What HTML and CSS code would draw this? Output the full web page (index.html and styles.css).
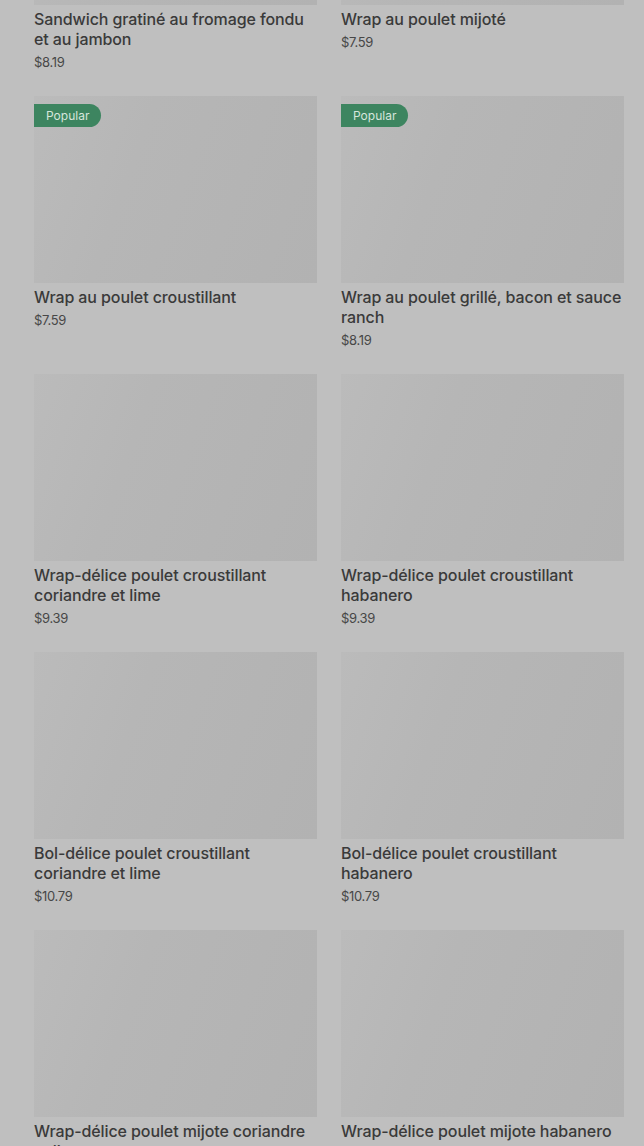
FILE: index.html
```html
<!DOCTYPE html>
<html lang="fr">
<head>
<meta charset="utf-8">
<link rel="stylesheet" href="styles.css">
</head>
<body>
<div class="grid">
  <div class="item"><div class="thumb"></div><div class="title">Sandwich gratiné au fromage fondu et au jambon</div><div class="price">$8.19</div></div>
  <div class="item"><div class="thumb"></div><div class="title">Wrap au poulet mijoté</div><div class="price">$7.59</div></div>
  <div class="item"><div class="thumb"><span class="badge">Popular</span></div><div class="title">Wrap au poulet croustillant</div><div class="price">$7.59</div></div>
  <div class="item"><div class="thumb"><span class="badge">Popular</span></div><div class="title">Wrap au poulet grillé, bacon et sauce ranch</div><div class="price">$8.19</div></div>
  <div class="item"><div class="thumb"></div><div class="title">Wrap-délice poulet croustillant coriandre et lime</div><div class="price">$9.39</div></div>
  <div class="item"><div class="thumb"></div><div class="title">Wrap-délice poulet croustillant habanero</div><div class="price">$9.39</div></div>
  <div class="item"><div class="thumb"></div><div class="title">Bol-délice poulet croustillant coriandre et lime</div><div class="price">$10.79</div></div>
  <div class="item"><div class="thumb"></div><div class="title">Bol-délice poulet croustillant habanero</div><div class="price">$10.79</div></div>
  <div class="item"><div class="thumb"></div><div class="title">Wrap-délice poulet mijote coriandre et lime</div><div class="price">$10.79</div></div>
  <div class="item"><div class="thumb"></div><div class="title">Wrap-délice poulet mijote habanero</div><div class="price">$10.79</div></div>
</div>
</body>
</html>
```

FILE: styles.css
```css
html, body {
  margin: 0;
  padding: 0;
  background: #bfbfbf;
  overflow: hidden;
}
body {
  font-family: Inter, "Noto Sans", sans-serif;
  color: #3a3a3a;
}
.grid {
  display: grid;
  grid-template-columns: 283px 283px;
  column-gap: 24px;
  row-gap: 24px;
  padding: 0 20px 0 34px;
  margin-top: -182px;
}
.item {
  display: flex;
  flex-direction: column;
}
.thumb {
  position: relative;
  height: 187px;
  background: linear-gradient(110deg, #bbbbbb 0%, #b6b6b6 35%, #b2b2b2 100%);
}
.badge {
  position: absolute;
  left: 0;
  top: 8px;
  height: 23px;
  line-height: 23px;
  padding: 0 12px;
  background: #3d8560;
  color: #d6e6dc;
  font-size: 12px;
  border-radius: 0 12px 12px 0;
}
.title {
  margin-top: 4px;
  font-size: 16px;
  font-weight: 500;
  line-height: 20px;
  letter-spacing: -0.1px;
}
.price {
  margin-top: 3px;
  font-size: 13px;
  line-height: 20px;
  color: #474747;
  letter-spacing: -0.3px;
}
```
